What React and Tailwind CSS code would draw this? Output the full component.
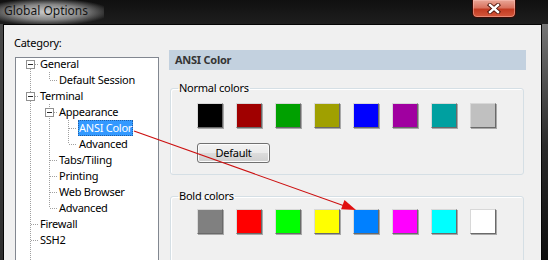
import React from "react";

const normalColors = [
  "bg-[#000000]",
  "bg-[#a00000]",
  "bg-[#00a000]",
  "bg-[#a0a000]",
  "bg-[#0000ff]",
  "bg-[#a000a0]",
  "bg-[#00a0a0]",
  "bg-[#c0c0c0]",
];

const boldColors = [
  "bg-[#808080]",
  "bg-[#ff0000]",
  "bg-[#00ff00]",
  "bg-[#ffff00]",
  "bg-[#0080ff]",
  "bg-[#ff00ff]",
  "bg-[#00ffff]",
  "bg-[#ffffff]",
];

// pl = where the label starts inside the tree box
const treeRows = [
  { label: "General", pl: "pl-[23px]" },
  { label: "Default Session", pl: "pl-[42px]" },
  { label: "Terminal", pl: "pl-[23px]" },
  { label: "Appearance", pl: "pl-[42px]" },
  { label: "ANSI Color", pl: "pl-[62px]", selected: true },
  { label: "Advanced", pl: "pl-[62px]" },
  { label: "Tabs/Tiling", pl: "pl-[42px]" },
  { label: "Printing", pl: "pl-[42px]" },
  { label: "Web Browser", pl: "pl-[42px]" },
  { label: "Advanced", pl: "pl-[42px]" },
  { label: "Firewall", pl: "pl-[23px]" },
  { label: "SSH2", pl: "pl-[23px]" },
];

const cy = (k) => 6 + 16 * k;

function ExpandBox({ x, row }) {
  const c = cy(row);
  return (
    <g>
      <rect x={x + 0.5} y={c - 3.5} width="8" height="8" fill="#fff" stroke="#919191" />
      <line x1={x + 2} x2={x + 7} y1={c + 0.5} y2={c + 0.5} stroke="#2b2b2b" />
    </g>
  );
}

function TreeLines() {
  const dot = { stroke: "#a0a0a0", strokeDasharray: "1 1" };
  const h = (x1, x2, row) => (
    <line key={`h${x1}-${row}`} x1={x1} x2={x2} y1={cy(row) + 0.5} y2={cy(row) + 0.5} {...dot} />
  );
  return (
    <svg className="absolute left-0 top-0" width="142" height="210">
      {/* root line */}
      <line x1="14.5" x2="14.5" y1="11" y2="210" {...dot} />
      {/* General children */}
      <line x1="33.5" x2="33.5" y1="14" y2={cy(1)} {...dot} />
      {h(34, 41, 1)}
      {/* Terminal children */}
      <line x1="33.5" x2="33.5" y1={cy(3) - 8} y2={cy(9)} {...dot} />
      {[6, 7, 8, 9].map((r) => h(34, 41, r))}
      {/* Appearance children */}
      <line x1="52.5" x2="52.5" y1={cy(4) - 8} y2={cy(5)} {...dot} />
      {[4, 5].map((r) => h(53, 61, r))}
      {/* root leaves and box connectors */}
      {[10, 11].map((r) => h(15, 22, r))}
      {h(19, 22, 0)}
      {h(19, 22, 2)}
      {h(38, 41, 3)}
      <ExpandBox x={10} row={0} />
      <ExpandBox x={10} row={2} />
      <ExpandBox x={29} row={3} />
    </svg>
  );
}

function Swatch({ color }) {
  return (
    <div
      className={`w-[26px] h-[25px] border border-t-[#d8d8d8] border-l-[#d8d8d8] border-r-[#6a6a6a] border-b-[#6a6a6a] shadow-[1px_1px_0_#a8a8a8] ${color}`}
    />
  );
}

function ColorGroup({ title, colors, className, children }) {
  return (
    <fieldset
      className={`ml-[1px] w-[354px] border border-[#d5dfe5] rounded-[3px] pl-[7px] shadow-[inset_1px_1px_0_#ffffff] ${className}`}
    >
      <legend className="px-[1px] leading-[16px] text-black">{title}</legend>
      <div className={`flex gap-[13px] ml-[19px] ${title === "Bold colors" ? "mt-[5px]" : "mt-[7px]"}`}>
        {colors.map((c) => (
          <Swatch key={c} color={c} />
        ))}
      </div>
      {children}
    </fieldset>
  );
}

export default function App() {
  return (
    <div className="relative w-[548px] h-[260px] overflow-hidden bg-[#141414] flex flex-col font-['Noto_Sans',sans-serif] text-[11px] tracking-[-0.25px]">
      {/* title bar */}
      <div className="h-[24px] flex items-start justify-between bg-gradient-to-b from-[#101010] to-[#1e1e1e]">
        <div className="h-[24px] pl-[4px] pr-[16px] leading-[22px] text-[12px] tracking-normal text-[#141414] bg-[radial-gradient(ellipse_at_45%_50%,rgba(215,215,215,0.95)_0%,rgba(170,170,170,0.75)_45%,rgba(40,40,40,0)_80%)]">
          Global Options
        </div>
        <button className="mr-[32px] w-[44px] h-[18px] flex items-center justify-center rounded-b-[5px] border border-t-0 border-[#3a0c05] bg-[linear-gradient(to_bottom,#e9a697_0%,#d9735f_45%,#c23b22_55%,#d5583c_100%)] shadow-[inset_0_0_0_1px_rgba(255,200,190,0.45)]">
          <svg width="14" height="11" viewBox="0 0 14 11">
            <path d="M3 2 L11 9 M11 2 L3 9" stroke="#4a1006" strokeWidth="4.2" strokeLinecap="square" />
            <path d="M3 2 L11 9 M11 2 L3 9" stroke="#ffffff" strokeWidth="2.4" strokeLinecap="square" />
          </svg>
        </button>
      </div>

      {/* window body */}
      <div className="flex flex-1">
        <div className="w-[3px] bg-gradient-to-b from-[#4a4a4a] to-[#2c2c2c]" />
        <div className="flex-1 flex border-l border-t border-r border-[#050505] bg-[#f0f0f0] pl-[10px] pt-[10px]">
          {/* category tree */}
          <div className="w-[145px] shrink-0">
            <div className="h-[15px] leading-[15px] text-black">Category:</div>
            <div className="relative ml-[1px] mt-[7px] w-[144px] h-[210px] border border-[#828790] bg-white">
              <TreeLines />
              <div className="relative -mt-[2px]">
                {treeRows.map((r, i) => (
                  <div key={i} className={`h-[16px] leading-[16px] ${r.pl}`}>
                    <span
                      className={`inline-block px-[1px] ${
                        r.selected ? "bg-[#3399ff] text-white outline outline-1 outline-dotted outline-[#1f5fa8] -outline-offset-1" : "text-black"
                      }`}
                    >
                      {r.label}
                    </span>
                  </div>
                ))}
              </div>
            </div>
          </div>

          {/* settings panel */}
          <div className="ml-[10px] flex flex-col">
            <div className="mt-[15px] w-[357px] h-[20px] leading-[20px] pl-[6px] font-bold text-[#353535] bg-[#c3d1df]">
              ANSI Color
            </div>
            <ColorGroup title="Normal colors" colors={normalColors} className="mt-[10px] pb-[11px]">
              <button className="ml-[19px] mt-[15px] w-[73px] h-[20px] leading-[18px] text-center text-black border border-[#707070] rounded-[3px] bg-[linear-gradient(to_bottom,#f2f2f2_0%,#ebebeb_50%,#dddddd_50%,#cfcfcf_100%)] shadow-[inset_0_0_0_1px_#fcfcfc]">
                Default
              </button>
            </ColorGroup>
            <ColorGroup title="Bold colors" colors={boldColors} className="mt-[13px] h-[80px]" />
          </div>
        </div>
        <div className="w-[6px] bg-gradient-to-b from-[#767676] via-[#2a2a2a] to-[#0c0c0c]" />
      </div>

      {/* annotation arrow */}
      <svg className="absolute inset-0 pointer-events-none" width="548" height="260">
        <line x1="134" y1="131" x2="346" y2="206.5" stroke="#cc1010" strokeWidth="1.1" />
        <polygon points="356,210 341.1,209.3 344.5,199.9" fill="#e01010" />
      </svg>
    </div>
  );
}
